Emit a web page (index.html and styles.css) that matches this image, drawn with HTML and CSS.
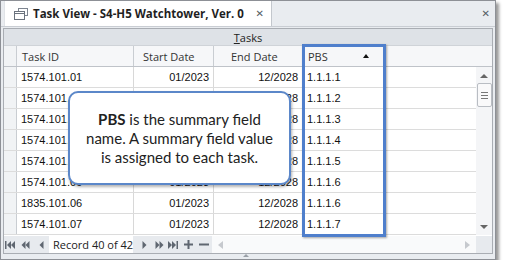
FILE: index.html
```html
<!DOCTYPE html>
<html lang="en">
<head>
  <meta charset="UTF-8">
  <title>Task View</title>
  <link rel="stylesheet" href="styles.css">
</head>
<body>
<div class="window">
  <!-- tab strip -->
  <div class="tabbar">
    <div class="tab">
      <svg class="tab-icon" width="14" height="12" viewBox="0 0 14 12">
        <rect x="4.5" y="0.5" width="9" height="7" fill="#fff" stroke="#7d8590"/>
        <rect x="0.5" y="3.5" width="10" height="8" fill="#fff" stroke="#6b737e"/>
        <line x1="1" y1="5.5" x2="10" y2="5.5" stroke="#6b737e"/>
      </svg>
      <span class="tab-title">Task View - S4-H5 Watchtower, Ver. 0</span>
      <span class="close">&#x2715;</span>
    </div>
    <div class="spacer"></div>
    <span class="close win-close">&#x2715;</span>
  </div>

  <!-- grid -->
  <div class="grid">
    <div class="band"><span><u>T</u>asks</span></div>
    <div class="row head">
      <div class="c ind"></div>
      <div class="c id">Task ID</div>
      <div class="c sd">Start Date</div>
      <div class="c ed">End Date</div>
      <div class="c pbs">PBS <span class="sort"></span></div>
      <div class="c fill"></div>
    </div>
    <div class="body">
      <div class="rows">
        <div class="row"><div class="c ind"></div><div class="c id">1574.101.01</div><div class="c sd">01/2023</div><div class="c ed">12/2028</div><div class="c pbs">1.1.1.1</div></div>
        <div class="row"><div class="c ind"></div><div class="c id">1574.101.02</div><div class="c sd">01/2023</div><div class="c ed">12/2028</div><div class="c pbs">1.1.1.2</div></div>
        <div class="row"><div class="c ind"></div><div class="c id">1574.101.03</div><div class="c sd">01/2023</div><div class="c ed">12/2028</div><div class="c pbs">1.1.1.3</div></div>
        <div class="row"><div class="c ind"></div><div class="c id">1574.101.04</div><div class="c sd">01/2023</div><div class="c ed">12/2028</div><div class="c pbs">1.1.1.4</div></div>
        <div class="row"><div class="c ind"></div><div class="c id">1574.101.05</div><div class="c sd">01/2023</div><div class="c ed">12/2028</div><div class="c pbs">1.1.1.5</div></div>
        <div class="row"><div class="c ind"></div><div class="c id">1574.101.06</div><div class="c sd">01/2023</div><div class="c ed">12/2028</div><div class="c pbs">1.1.1.6</div></div>
        <div class="row"><div class="c ind"></div><div class="c id">1835.101.06</div><div class="c sd">01/2023</div><div class="c ed">12/2028</div><div class="c pbs">1.1.1.6</div></div>
        <div class="row"><div class="c ind"></div><div class="c id">1574.101.07</div><div class="c sd">01/2023</div><div class="c ed">12/2028</div><div class="c pbs">1.1.1.7</div></div>
      </div>
      <div class="vscroll">
        <span class="arr up"></span>
        <span class="thumb"><i></i><i></i><i></i></span>
        <span class="arr down"></span>
      </div>
    </div>
    <div class="nav">
      <div class="navbtns">
        <svg class="b-first" width="10" height="8" viewBox="0 0 10 8"><rect x="0" y="0" width="1.5" height="8" fill="#5f6670"/><polygon points="6,0 2,4 6,8" fill="#5f6670"/><polygon points="10,0 6,4 10,8" fill="#5f6670"/></svg>
        <svg class="b-prevpage" width="9" height="8" viewBox="0 0 9 8"><polygon points="4.5,0 0.5,4 4.5,8" fill="#5f6670"/><polygon points="8.5,0 4.5,4 8.5,8" fill="#5f6670"/></svg>
        <svg class="b-prev" width="5" height="8" viewBox="0 0 5 8"><polygon points="4.5,0 0.5,4 4.5,8" fill="#5f6670"/></svg>
        <span class="record">Record 40 of 42</span>
        <svg class="b-next" width="5" height="8" viewBox="0 0 5 8"><polygon points="0.5,0 4.5,4 0.5,8" fill="#5f6670"/></svg>
        <svg class="b-nextpage" width="9" height="8" viewBox="0 0 9 8"><polygon points="0.5,0 4.5,4 0.5,8" fill="#5f6670"/><polygon points="4.5,0 8.5,4 4.5,8" fill="#5f6670"/></svg>
        <svg class="b-last" width="10" height="8" viewBox="0 0 10 8"><polygon points="0,0 4,4 0,8" fill="#5f6670"/><polygon points="4,0 8,4 4,8" fill="#5f6670"/><rect x="8.5" y="0" width="1.5" height="8" fill="#5f6670"/></svg>
        <svg class="b-add" width="9" height="9" viewBox="0 0 9 9"><rect x="0" y="3.5" width="9" height="2" fill="#5f6670"/><rect x="3.5" y="0" width="2" height="9" fill="#5f6670"/></svg>
        <svg class="b-del" width="10" height="9" viewBox="0 0 10 9"><rect x="0" y="3.5" width="10" height="2" fill="#5f6670"/></svg>
      </div>
      <div class="hscroll">
        <span class="harr left"></span>
        <span class="harr right"></span>
      </div>
      <div class="corner"></div>
    </div>

    <!-- overlays -->
    <div class="pbs-box"></div>
    <div class="callout">
      <b>PBS</b> is the summary field<br>name. A summary field value<br>is assigned to each task.
    </div>
  </div>
  <div class="grip"></div>
</div>
</body>
</html>
```

FILE: styles.css
```css
body{margin:0;background:#fff;font-family:"Liberation Sans",Arial,sans-serif;color:#111}
.window{position:relative;width:494px;height:258px;border:1px solid #8d9096;background:#e9ecf0;box-shadow:3px 3px 3px rgba(0,0,0,.4)}
.tabbar{display:flex;height:25px;border-bottom:1px solid #c9cdd3}
.tab{display:flex;align-items:center;margin-left:3px;width:266px;background:#fff;border-right:1px solid #c3c7cd;border-left:1px solid #e0e3e7}
.tab-icon{margin:0 5px 0 9px;flex:none}
.tab-title{font-family:"Open Sans",sans-serif;font-weight:700;font-size:11.5px;color:#1f1f1f;white-space:nowrap;flex:1}
.close{font-family:"DejaVu Sans",sans-serif;font-size:10px;font-weight:700;color:#555b63;margin-right:7px}
.spacer{flex:1}
.win-close{margin-right:5px;align-self:center}
.grid{position:relative;margin:1px 2px 0;border:1px solid #a9adb3;background:#fff;height:224px;display:flex;flex-direction:column}
.band{height:16px;background:#dee2e7;border-bottom:1px solid #cfd3d8;display:flex;justify-content:center;align-items:center;font-family:"Open Sans",sans-serif;font-size:11px;color:#222}
.band u{text-decoration-thickness:1px;text-underline-offset:1px}
.row{display:flex;height:20px;border-bottom:1px solid #dcdcdc}
.c{box-sizing:border-box;border-right:1px solid #d8d8d8;padding:0 4px;display:flex;align-items:center;font-size:11px;white-space:nowrap;overflow:hidden}
.ind{width:13px;background:#f1f3f5;border-right:1px solid #c9cdd2}
.id{width:117px}
.sd{width:80px;justify-content:flex-end}
.ed{width:89px;justify-content:flex-end}
.pbs{width:81px}
.fill{flex:1;border-right:none}
.head{background:#f6f7f9;border-bottom:1px solid #bfc3c9}
.head .c{font-family:"Open Sans",sans-serif;font-size:11px;color:#333;border-right-color:#c9cdd2}
.head .id,.head .pbs{padding-left:5px}
.head .sd{justify-content:flex-start;padding-left:9px}
.head .ed{justify-content:flex-start;padding-left:17px}
.head .pbs{justify-content:space-between;padding-right:14px}
.sort{width:0;height:0;border-left:3px solid transparent;border-right:3px solid transparent;border-bottom:4px solid #111}
.body{display:flex;flex:1}
.rows{flex:1}
.rows .row{height:20px}
.vscroll{width:16px;background:#f4f5f7;display:flex;flex-direction:column;align-items:center;padding-top:7px}
.arr{width:0;height:0;border-left:4px solid transparent;border-right:4px solid transparent}
.up{border-bottom:4px solid #666}
.down{border-top:4px solid #666;margin-top:auto;margin-bottom:6px}
.thumb{box-sizing:border-box;width:15px;height:24px;margin-top:5px;border:1px solid #b9bdc3;border-radius:2px;background:#f9f9fa;display:flex;flex-direction:column;justify-content:center;align-items:center;gap:2px}
.thumb i{display:block;width:7px;height:1px;background:#777}
.nav{display:flex;height:17px;background:#e7eaee;border-top:1px solid #fff}
.navbtns{display:flex;align-items:center;padding-left:1px;width:207px;flex:none}
.b-prevpage{margin-left:6px}
.b-prev{margin-left:9px}
.record{margin-left:5px;background:#fff;height:100%;width:84px;box-sizing:border-box;display:flex;align-items:center;padding:0 4px;font-family:"Open Sans",sans-serif;font-size:11px;color:#222;white-space:nowrap}
.b-next{margin-left:9px}
.b-nextpage{margin-left:8px}
.b-last{margin-left:4px}
.b-add{margin-left:6px}
.b-del{margin-left:6px}
.hscroll{width:264px;background:#f9fafb;display:flex;align-items:center;justify-content:space-between;padding:0 6px;box-sizing:border-box;flex:none}
.harr{width:0;height:0;border-top:4px solid transparent;border-bottom:4px solid transparent}
.left{border-right:5px solid #c6c9ce}
.right{border-left:5px solid #c6c9ce}
.corner{flex:1}
.pbs-box{position:absolute;left:298px;top:15px;width:78px;height:187px;border:3px solid #4f7fcc;box-shadow:1px 1px 2px rgba(0,0,0,.35)}
.callout{position:absolute;left:64px;top:62px;width:219px;height:73px;padding-top:17px;border:2px solid #5b87c9;border-radius:10px;background:#fff;box-shadow:1px 2px 3px rgba(0,0,0,.3);font-family:"Lato",sans-serif;font-size:15px;line-height:19px;text-align:center;color:#222}
.grip{position:absolute;left:242px;top:253px;width:0;height:0;border-left:3px solid transparent;border-right:3px solid transparent;border-bottom:3px solid #9aa0a7}
```
